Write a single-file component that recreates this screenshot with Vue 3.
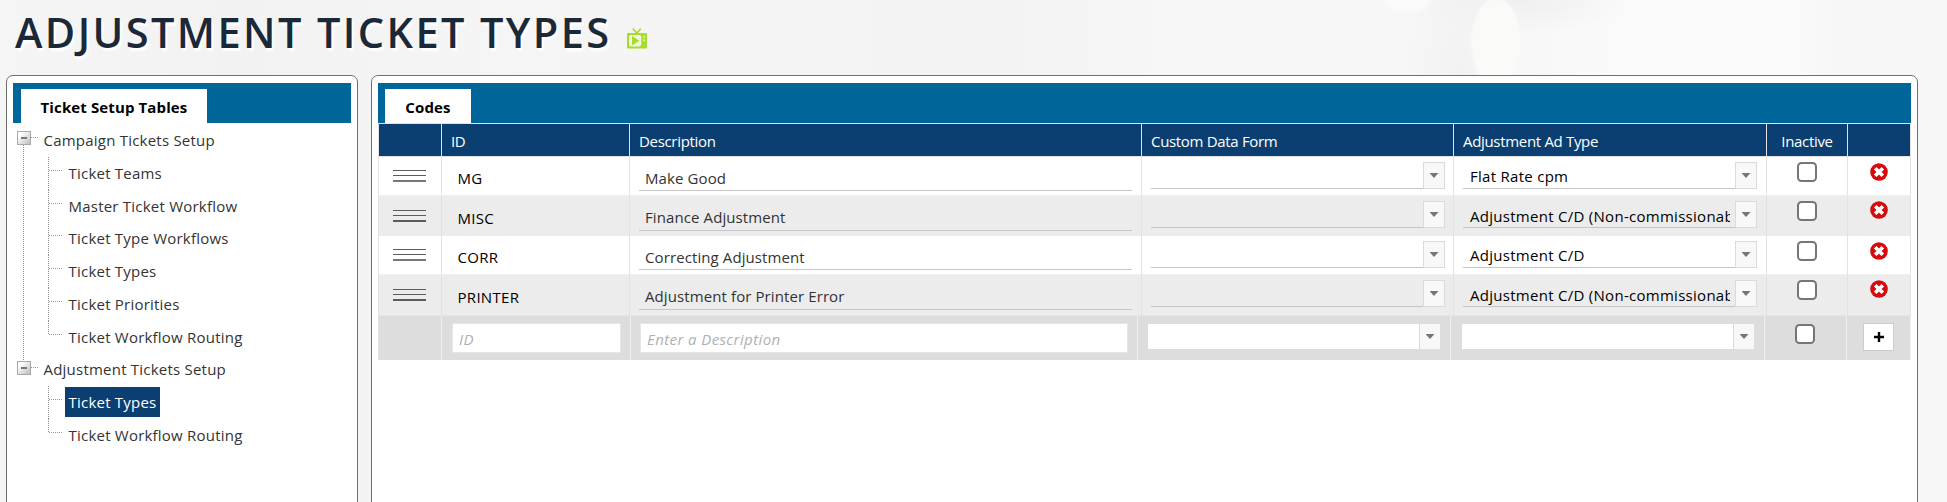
<script setup>
const tree = [
  {
    label: 'Campaign Tickets Setup',
    children: ['Ticket Teams', 'Master Ticket Workflow', 'Ticket Type Workflows', 'Ticket Types', 'Ticket Priorities', 'Ticket Workflow Routing'],
    selected: -1,
  },
  { label: 'Adjustment Tickets Setup', children: ['Ticket Types', 'Ticket Workflow Routing'], selected: 0 },
]
const rows = [
  { id: 'MG', desc: 'Make Good', type: 'Flat Rate cpm' },
  { id: 'MISC', desc: 'Finance Adjustment', type: 'Adjustment C/D (Non-commissionab' },
  { id: 'CORR', desc: 'Correcting Adjustment', type: 'Adjustment C/D' },
  { id: 'PRINTER', desc: 'Adjustment for Printer Error', type: 'Adjustment C/D (Non-commissionab' },
]
</script>

<template>
  <div class="page">
    <header class="head">
      <h1>ADJUSTMENT TICKET TYPES</h1>
      <svg class="tv" width="20" height="21" viewBox="0 0 20 21">
        <path d="M5.7 0.7 L9.8 5 L13.8 0.7" fill="none" stroke="#a9de35" stroke-width="1.7" />
        <rect x="0" y="5" width="20" height="15.5" rx="1" fill="#a6dc2c" />
        <rect x="2" y="7" width="12.2" height="11.4" rx="1.8" fill="#eff7de" />
        <path d="M5 8 L12.4 12.7 L5 17.4 Z" fill="#a6dc2c" />
        <circle cx="17" cy="9" r="1" fill="#e3f5bd" />
        <circle cx="17" cy="12.3" r="1" fill="#e3f5bd" />
      </svg>
    </header>

    <main class="panels">
      <section class="panel side">
        <div class="bar"><span class="tab">Ticket Setup Tables</span></div>
        <ul class="tree">
          <li v-for="(n, i) in tree" :key="n.label" class="node" :class="{ linked: i === 0 }">
            <div class="root"><i class="toggle"></i><i class="dots"></i><span class="label root-label">{{ n.label }}</span></div>
            <ul class="kids">
              <li v-for="(c, k) in n.children" :key="c" class="kid">
                <span class="label" :class="{ selected: n.selected === k }">{{ c }}</span>
              </li>
            </ul>
          </li>
        </ul>
      </section>

      <section class="panel main">
        <div class="bar"><span class="tab code-tab">Codes</span></div>
        <div class="table">
          <div class="tr th">
            <div></div><div>ID</div><div>Description</div><div>Custom Data Form</div><div>Adjustment Ad Type</div><div class="mid">Inactive</div><div></div>
          </div>
          <div v-for="(r, i) in rows" :key="r.id" class="tr row" :class="{ alt: i % 2 }">
            <div class="grip-cell"><span class="grip"><i></i><i></i><i></i></span></div>
            <div class="id">{{ r.id }}</div>
            <div class="desc-cell"><div class="desc">{{ r.desc }}</div></div>
            <div class="sel-cell"><div class="sel"><span></span><b><i></i></b></div></div>
            <div class="sel-cell"><div class="sel"><span>{{ r.type }}</span><b><i></i></b></div></div>
            <div class="check-cell"><i class="check"></i></div>
            <div class="del-cell">
              <svg width="18" height="18" viewBox="0 0 18 18">
                <circle cx="9" cy="9" r="8.8" fill="#d40a0c" />
                <path d="M5.2 5.2 L12.8 12.8 M12.8 5.2 L5.2 12.8" stroke="#fff" stroke-width="3.7" />
              </svg>
            </div>
          </div>
          <div class="tr foot">
            <div></div>
            <div><div class="input id-input">ID</div></div>
            <div><div class="input desc-input">Enter a Description</div></div>
            <div><div class="sel custom"><span></span><b><i></i></b></div></div>
            <div><div class="sel adtype"><span></span><b><i></i></b></div></div>
            <div class="check-cell"><i class="check"></i></div>
            <div><div class="add">
              <svg width="10" height="10" viewBox="0 0 10 10"><path d="M5 0V10M0 5H10" stroke="#000" stroke-width="2.4" /></svg>
            </div></div>
          </div>
        </div>
      </section>
    </main>
  </div>
</template>

<style>
body { overflow: hidden; }
</style>

<style scoped>
* { box-sizing: border-box; }
.page {
  width: 1947px; height: 502px; overflow: hidden;
  font-family: "Open Sans", "Noto Sans", sans-serif; font-size: 15px; color: #333;
  background:
    radial-gradient(ellipse 26px 48px at 1496px 43px, #fafaf9 0 88%, transparent 100%),
    radial-gradient(ellipse 26px 14px at 1408px 0, #fafafa 0 80%, transparent 100%),
    radial-gradient(ellipse 110px 36px at 1520px 0, #efefef, transparent),
    radial-gradient(ellipse 50px 110px at 1460px 70px, #f2f2f2, transparent),
    linear-gradient(90deg, #f5f5f5 0, #f2f2f2 240px, #f5f5f5 500px, #f3f3f3 1000px, #f7f7f7 1200px, #f6f6f6 1440px, #fafafa 1620px, #fafafa 1800px, #f6f6f6 1850px, #f7f7f7 100%);
}
.head { height: 75px; padding-left: 15px; display: flex; align-items: flex-start; }
h1 {
  margin: 0; width: 612px; white-space: nowrap; font-size: 41.5px; line-height: 64px; font-weight: 600;
  letter-spacing: 2.4px; color: #1b2838; text-shadow: 2px 3px 2px #fff;
}
.tv { margin-top: 28px; }
.panels { display: flex; gap: 13px; padding-left: 6px; }
.panel { height: 450px; border: 1px solid #6f6f6f; border-radius: 7px; background: #fff; padding: 7px 6px; }
.side { width: 352px; }
.main { width: 1547px; }
.bar { height: 40px; background: #00669a; padding: 6px 0 0 8px; }
.main .bar { padding-left: 7px; }
.tab {
  display: flex; justify-content: center; width: 186px; height: 34px; background: #fff;
  font-weight: 700; font-size: 15px; line-height: 36px; color: #000; white-space: nowrap; letter-spacing: .12px;
}
.code-tab { width: 86px; }

ul { list-style: none; margin: 0; padding: 0; }
.tree { padding: 1px 0 0 4px; }
.node { position: relative; }
.linked::before {
  content: ""; position: absolute; left: 6px; top: 21px; width: 1px; height: 216px;
  background: repeating-linear-gradient(#8c8c8c 0 1px, transparent 1px 2px);
}
.root { display: flex; height: 32.8px; align-items: flex-start; }
.toggle {
  width: 14px; height: 14px; margin-top: 7px; border: 1px solid #a9a9a9; display: grid; place-items: center;
  background: linear-gradient(135deg, #fff 20%, #bdbdbd);
}
.toggle::after { content: ""; width: 6px; height: 2px; background: #777; }
.dots { width: 7px; height: 1px; margin-top: 13px; background: repeating-linear-gradient(90deg, #999 0 1px, transparent 1px 2px); }
.label { white-space: nowrap; line-height: 30px; height: 30px; padding: 0 4px 0 3.5px; letter-spacing: .22px; }
.root-label { padding: 0; margin-left: 5.5px; margin-top: 1px; }
.node + .node .root-label { margin-top: 0; }
.kids { padding-left: 31px; }
.kid { position: relative; height: 32.8px; padding: 1px 0 0 17px; display: flex; }
.kid::before {
  content: ""; position: absolute; left: 0; top: 0; width: 1px; height: 33px;
  background: repeating-linear-gradient(#8c8c8c 0 1px, transparent 1px 2px);
}
.kid:last-child::before { height: 14px; }
.kid::after {
  content: ""; position: absolute; left: 1px; top: 13px; width: 13px; height: 1px;
  background: repeating-linear-gradient(90deg, #999 0 1px, transparent 1px 2px);
}
.selected { background: #0c3f71; color: #fff; }

.table { border-left: 1px solid #e2e2e2; border-top: 1px solid #e2e2e2; }
.tr { display: grid; grid-template-columns: 63px 188px 512px 312px 313px 81px 63px; }
.tr > div { border-right: 1px solid #e2e2e2; min-width: 0; }
.th { height: 33px; background: #0c3f71; color: #fff; border-bottom: 1px solid #e2e2e2; font-size: 15px; line-height: 34px; letter-spacing: -.32px; }
.th > div { padding-left: 9px; white-space: nowrap; }
.th > .mid { padding: 0; text-align: center; }
.row { height: 38px; background: #fff; }
.row.alt { height: 41px; background: #ececec; border-top: 1px solid #f0f0f0; }
.grip-cell { padding: 13px 0 0 14px; }
.alt .grip-cell { padding-top: 14px; }
.grip { display: flex; flex-direction: column; gap: 4px; width: 33px; }
.grip i { height: 1px; background: #5c5c5c; }
.grip i:last-child { height: 2px; background: #777; }
.alt .grip i:last-child { background: #5c5c5c; }
.id { padding: 6px 0 0 15.5px; line-height: 30px; color: #000; letter-spacing: .3px; }
.alt .id { padding-top: 7px; }
.desc-cell { padding-left: 9px; }
.desc { width: 493px; height: 34px; padding: 6px 0 0 6px; line-height: 30px; border-bottom: 1px solid #c6c6c6; letter-spacing: .1px; }
.desc { white-space: nowrap; }
.alt .desc { height: 35px; }
.sel-cell { padding: 5px 0 0 9px; }
.sel { display: flex; width: 294px; height: 27px; }
.sel span { flex: 1; min-width: 0; border-bottom: 1px solid #c6c6c6; padding-left: 7px; line-height: 29px; color: #000; white-space: nowrap; overflow: hidden; letter-spacing: .28px; }
.sel span { position: relative; }
.sel span::after { content: ""; position: absolute; right: 0; top: 0; width: 5px; height: 25px; background: #fff; }
.alt .sel span::after { background: #ececec; }
.alt .sel span { line-height: 31px; }
.sel b { width: 22px; border: 1px solid #dadada; background: #f8f8f8; display: grid; place-items: center; }
.sel b i { width: 9px; height: 5px; background: #757575; clip-path: polygon(0 0, 100% 0, 50% 100%); }
.check-cell { padding: 5px 0 0 30px; }
.alt .check-cell { padding-top: 5px; }
.check { display: block; width: 20px; height: 20px; border: 2px solid #767676; border-radius: 4.5px; background: #fff; }
.del-cell { padding: 6px 0 0 22px; }
.alt .del-cell { padding-top: 5px; }
.del-cell svg { display: block; }
.foot { height: 45px; background: #ddd; border-top: 1px solid #e6e6e6; grid-template-columns: 63px 189px 507px 313px 314px 82px 64px; }
.tr.foot > div { border-color: #f0f0f0; }
.input { margin-top: 7px; height: 30px; background: #fff; border: 1px solid #e6e6e6; padding-left: 6px; line-height: 30px; font-style: italic; color: #b0b0b0; white-space: nowrap; letter-spacing: .4px; }
.id-input { width: 169px; margin-left: 10px; }
.desc-input { width: 488px; margin-left: 9px; }
.foot .sel { height: 25px; margin: 8px 0 0 10px; width: 292px; }
.foot .adtype { margin-left: 11px; }
.foot .sel span { background: #fff; border: 0; }
.foot .sel b { width: 21px; border-width: 0 0 0 1px; }
.foot .check-cell { padding: 8px 0 0 30px; }
.add { width: 31px; height: 28px; margin: 7px 0 0 16px; background: #fff; border: 1px solid #ccc; display: grid; place-items: center; }
</style>
